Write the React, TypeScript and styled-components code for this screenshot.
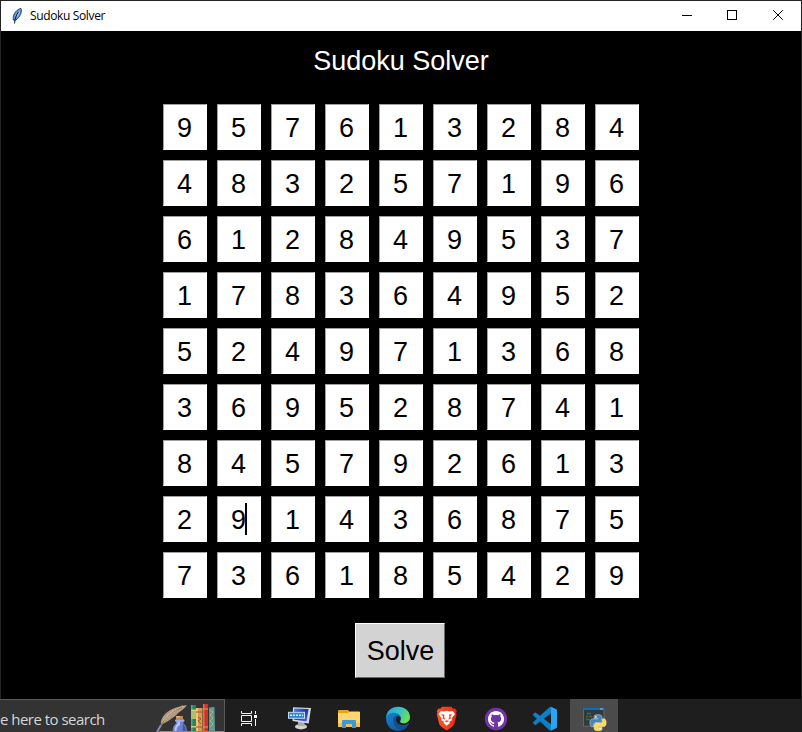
import React from "react";
import styled, { createGlobalStyle } from "styled-components";

const GlobalStyle = createGlobalStyle`
  * { box-sizing: border-box; }
  html, body { margin: 0; padding: 0; background: #000; }
  svg { display: block; }
`;

const Screen = styled.div`
  width: 802px;
  height: 732px;
  display: flex;
  flex-direction: column;
  overflow: hidden;
`;

const Window = styled.main`
  height: 699px;
  display: flex;
  flex-direction: column;
  background: #000;
  border: solid #242424;
  border-width: 1px 1px 0 1px;
`;

const TitleBar = styled.header`
  height: 30px;
  flex: none;
  display: flex;
  align-items: center;
  background: #fff;
  padding-left: 9px;
`;

const TitleText = styled.span`
  flex: 1;
  margin-left: 5px;
  font: 12px/16px "Segoe UI", "Open Sans", sans-serif;
  letter-spacing: -0.36px;
  color: #000;
`;

const Controls = styled.div`
  display: flex;
  height: 30px;
`;

const ControlIcon = styled.svg`
  width: 46px;
  height: 30px;
  stroke: #000;
  fill: none;
`;

const Client = styled.section`
  flex: 1;
  display: flex;
  flex-direction: column;
  align-items: center;
  font: 27px/31px Arial, "Liberation Sans", sans-serif;
`;

const Heading = styled.h1`
  margin: 15px 0 0;
  font: inherit;
  color: #fff;
`;

const Board = styled.div`
  margin-top: 27px;
  display: grid;
  grid-template-columns: repeat(9, 44px);
  grid-auto-rows: 46px;
  gap: 10px;
`;

const Cell = styled.div`
  position: relative;
  display: flex;
  align-items: center;
  padding: 3px 0 0 13px;
  background: #fff;
  color: #000;
  border: 1px solid #fff;
  border-top-color: #a0a0a0;
  border-left-color: #a0a0a0;
`;

const Caret = styled.i`
  position: absolute;
  left: 27px;
  top: 6px;
  width: 2px;
  height: 32px;
  background: #000;
`;

const SolveButton = styled.button`
  margin: 25px 0 0;
  width: 90px;
  height: 55px;
  padding: 2px 0 0 1px;
  font: inherit;
  color: #000;
  background: #d3d3d3;
  border: 1px solid #fff;
  border-right-color: #696969;
  border-bottom-color: #696969;
  transform: translateX(-1px);
`;

const Taskbar = styled.footer`
  height: 33px;
  display: grid;
  grid-template-columns: 225px 49px 49px 50px 49px 49px 49px 50px 48px 1fr;
  background: #1e1e1e;
`;

const SearchBox = styled.div`
  display: flex;
  background: #333;
  border-top: 1px solid #5b5b5b;
  border-right: 1px solid #5b5b5b;
  overflow: hidden;
`;

const SearchText = styled.span`
  width: 150px;
  flex: none;
  padding-top: 9px;
  font: 15px/20px "Segoe UI", "Open Sans", sans-serif;
  letter-spacing: -0.52px;
  white-space: nowrap;
  color: #d6d6d6;
`;

const SearchArt = styled.svg`
  width: 74px;
  height: 32px;
  flex: none;
`;

const TaskItem = styled.div<{ $active?: boolean }>`
  height: 33px;
  overflow: hidden;
  background: ${(p) => (p.$active ? "#4b4b4b" : "transparent")};
`;

const TaskIcon = styled.svg`
  width: 48px;
  height: 33px;
`;

const rows = [
  "957613284",
  "483257196",
  "612849537",
  "178364952",
  "524971368",
  "369528741",
  "845792613",
  "291436875",
  "736185429",
];

const Quill = () => (
  <svg width="15" height="18" viewBox="0 0 15 18">
    <path d="M3.3 13C2.6 9 4.5 3.6 10.8 1.3C12.4 4.5 10.4 10 5.5 13.3Z" fill="#5c9ae0" stroke="#26333e" strokeWidth=".9" />
    <path d="M5.4 9L10 3L9.8 6L7.2 10Z" fill="#9cc8f0" />
    <path d="M8.5 5C6.4 8 5 11 4.5 16.5" stroke="#101820" strokeWidth="1" fill="none" />
  </svg>
);

const DeskArt = () => (
  <SearchArt viewBox="0 1 74 32">
    <path d="M7.5 33C12 23 20 13 33 6.5" stroke="#7b6a58" strokeWidth="1.4" fill="none" />
    <path d="M11 26C10 18 17 8.5 37 6.2C34 10 31 12 28 14C26 17 23 18.5 21 20C18 22.5 14 24 11 26Z" fill="#b49a7f" />
    <path d="M11 26C14 18 22 10 37 6.2C27 10 18 17 11 26Z" fill="#e2cdb4" />
    <path d="M11 26C16 18 23 12 32 8.5" stroke="#705a48" strokeWidth=".8" fill="none" />
    <path d="M6.8 33L11 26" stroke="#8d84ba" strokeWidth="1.8" />
    <path d="M26 20H33.5V24.5C36 26 37 29 37 33H22.5C22.5 29 23.5 26 26 24.5Z" fill="#6d7fd0" />
    <path d="M27.5 22H30V26C27.5 27 26.5 29 26.5 32H24.5C24.5 28 25.5 26 27.5 25Z" fill="#bac6fa" />
    <path d="M33 25C35 27 36 29 36 33H32.5Z" fill="#4557a4" />
    <rect x="25" y="20.5" width="9.5" height="2.2" rx="1" fill="#a1aceb" />
    <path d="M26 17H33V21H26Z" fill="#bc8957" />
    <path d="M26 17H30V18.5H26Z" fill="#deb07e" />
    <path d="M41 6H46V32H41Z" fill="#218463" />
    <path d="M41 6H42.5V32H41Z" fill="#45b388" />
    <path d="M41 10.5H46V12H41ZM41 27H46V28.5H41Z" fill="#dfc666" />
    <path d="M41 12H46V20H41Z" fill="#a7c272" />
    <path d="M46 9H52.5V32H46Z" fill="#dc984c" />
    <path d="M46 9H48V32H46Z" fill="#f5c37b" />
    <path d="M46 13H52.5M46 28H52.5" stroke="#8d5834" />
    <path d="M48 18L51 20L48 22L51 25" stroke="#8c582c" fill="none" />
    <path d="M53 5H58V32H53Z" fill="#cb3429" />
    <path d="M53 5H54.5V32H53Z" fill="#ed6552" />
    <path d="M53 10H58M53 28H58" stroke="#ef9a56" />
    <path d="M59 8.5L64.5 8L65 32H59Z" fill="#5b9c9b" />
    <path d="M60 11L63 13L60 16L63 19L60 22L63 25L60 28" stroke="#c1b16d" fill="none" />
    <path d="M9 32.5H74" stroke="#9d8769" />
  </SearchArt>
);

const TaskView = () => (
  <TaskIcon viewBox="0 0 48 33" fill="none" stroke="#f4f4f4" strokeWidth="1">
    <path d="M16.5 12V14.5H26.5V12M16.5 27V24.5H26.5V27M16.5 16.5H26.5V22.5H16.5ZM30.5 12V15M30.5 20V27" />
    <rect x="29" y="16" width="3" height="3" fill="#fff" stroke="none" />
  </TaskIcon>
);

const RemoteKeyboard = () => (
  <TaskIcon viewBox="0 0 48 33">
    <defs>
      <linearGradient id="crt" x1="0" y1="0" x2="1" y2="1">
        <stop offset="0" stopColor="#5f80ee" />
        <stop offset=".5" stopColor="#1432c8" />
        <stop offset="1" stopColor="#5779e4" />
      </linearGradient>
    </defs>
    <ellipse cx="27" cy="27.7" rx="6" ry="2.7" fill="#d2d3cf" />
    <path d="M24 22H30L31 27H24Z" fill="#aaaea9" />
    <path d="M19 8.3L37 9L34.7 24.5L18.5 22Z" fill="#d9dcda" />
    <path d="M20.2 9.5L34.6 10L32.6 22.5L19.7 20.5Z" fill="url(#crt)" />
    <rect x="14" y="12.8" width="17" height="7" fill="#c4dcf2" />
    <rect x="15" y="13.8" width="15" height="5" fill="#3487cb" />
    <path d="M16 16.3H29" stroke="#d8ebf8" strokeWidth="1.4" strokeDasharray="2 1" />
  </TaskIcon>
);

const Folder = () => (
  <TaskIcon viewBox="0 0 48 33">
    <path d="M15 12Q15 11 16 11H25L27 13H36Q37 13 37 14V28H15Z" fill="#e5a51e" />
    <path d="M15 14H25L27 12.5H36Q37 12.5 37 13.5V28H15Z" fill="#ffd66b" />
    <path d="M15 24H37V28H15Z" fill="#f6bf4b" />
    <path d="M19 29V22Q19 21 20 21H32Q33 21 33 22V29H29V25H23V29Z" fill="#3c98dc" />
  </TaskIcon>
);

const Edge = () => (
  <TaskIcon viewBox="0 0 48 33">
    <defs>
      <linearGradient id="edgeTop" x1="0" y1="0" x2="1" y2=".4">
        <stop offset="0" stopColor="#249fd9" />
        <stop offset=".55" stopColor="#32c3c8" />
        <stop offset="1" stopColor="#66df5d" />
      </linearGradient>
      <linearGradient id="edgeLow" x1="0" y1="0" x2="1" y2="1">
        <stop offset="0" stopColor="#1b82d1" />
        <stop offset="1" stopColor="#0b4e96" />
      </linearGradient>
    </defs>
    <path d="M13 19C13 15 17 13 21 13C27 13 29 17 28 20C27 22 27 24 31 24.5C34 25 35.5 24 36 23.7C34 29 30 31.8 25 31.8C18 31.8 13 26.5 13 19Z" fill="url(#edgeLow)" />
    <path d="M20.5 19C19.5 26 24 31.5 29.5 31C33 29.5 35 27 36 24C29 28 22 25 22.5 20C22.7 18 24 16.8 25 16.5C22 16.5 20.8 17.5 20.5 19Z" fill="#124f92" />
    <path d="M24 17.5C22 19.5 22.5 24.5 27.5 25.8C30 26.4 33 26 35.5 24.8C33 25 28 25 27 22.5C26.8 21.5 28 20.8 27.6 19C27.2 17.5 25.5 16.8 24 17.5Z" fill="#1e1e1e" />
    <path d="M13 19C13.4 12 18.5 7.8 25 7.8C32 7.8 37 12.5 37 18C37 22 34 24.3 30.5 24.3C27.5 24.3 26.5 23 27.5 21.5C29.5 18 26 13.8 21 13.8C17 13.8 13.7 16 13 19Z" fill="url(#edgeTop)" />
  </TaskIcon>
);

const Brave = () => (
  <TaskIcon viewBox="0 0 48 33">
    <defs>
      <linearGradient id="brave">
        <stop offset="0" stopColor="#ff5723" />
        <stop offset="1" stopColor="#ef2616" />
      </linearGradient>
    </defs>
    <path d="M20 7.8H29.5L31.2 9.7L33 9.4L34.8 12L34.1 14L34.6 15.5L32.3 25L30.5 27.5L24.7 31.5L19 27.5L17.2 25L14.8 15.5L15.4 14L14.7 12L16.5 9.4L18.3 9.7Z" fill="url(#brave)" />
    <path d="M18.8 12L22 12.5L24.7 11.8L27.5 12.5L30.7 12L33 15L29.8 19.3L30.2 21L27.2 23L28 24L24.7 26.8L21.4 24L22.3 23L19.2 21L19.7 19.3L16.5 15Z" fill="#fff" />
    <path d="M19 15.1L22.7 15.8L22.1 17.5L23.2 20.7L20.5 19.5L21 17.3ZM30.5 15.1L26.8 15.8L27.4 17.5L26.3 20.7L29 19.5L28.5 17.3ZM22.3 22L24.7 23.2L27.2 22L24.7 21.2Z" fill="#f44624" />
  </TaskIcon>
);

const GitHub = () => (
  <TaskIcon viewBox="0 0 48 33">
    <circle cx="25" cy="20" r="11.2" fill="#7433a5" />
    <path
      transform="translate(17 11.8) scale(.67)"
      fill="#fff"
      d="M12 .297c-6.63 0-12 5.373-12 12 0 5.303 3.438 9.8 8.205 11.385.6.113.82-.258.82-.577 0-.285-.01-1.04-.015-2.04-3.338.724-4.042-1.61-4.042-1.61C4.422 18.07 3.633 17.7 3.633 17.7c-1.087-.744.084-.729.084-.729 1.205.084 1.838 1.236 1.838 1.236 1.07 1.835 2.809 1.305 3.495.998.108-.776.417-1.305.76-1.605-2.665-.3-5.466-1.332-5.466-5.93 0-1.31.465-2.38 1.235-3.22-.135-.303-.54-1.523.105-3.176 0 0 1.005-.322 3.3 1.23.96-.267 1.98-.399 3-.405 1.02.006 2.04.138 3 .405 2.28-1.552 3.285-1.23 3.285-1.23.645 1.653.24 2.873.12 3.176.765.84 1.23 1.91 1.23 3.22 0 4.61-2.805 5.625-5.475 5.92.42.36.81 1.096.81 2.22 0 1.606-.015 2.896-.015 3.286 0 .315.21.69.825.57C20.565 22.092 24 17.592 24 12.297c0-6.627-5.373-12-12-12"
    />
  </TaskIcon>
);

const VsCode = () => (
  <TaskIcon viewBox="0 0 48 33">
    <g transform="translate(13 7.7)">
      <path
        fill="#0b80c8"
        d="M23.15 2.587L18.21.21a1.494 1.494 0 0 0-1.705.29l-9.46 8.63-4.12-3.128a.999.999 0 0 0-1.276.057L.327 7.261A1 1 0 0 0 .326 8.74L3.899 12 .326 15.26a1 1 0 0 0 .001 1.479L1.65 17.94a.999.999 0 0 0 1.276.057l4.12-3.128 9.46 8.63a1.492 1.492 0 0 0 1.704.29l4.942-2.377A1.5 1.5 0 0 0 24 20.06V3.939a1.5 1.5 0 0 0-.85-1.352zm-5.146 14.861L10.826 12l7.178-5.448v10.896z"
      />
      <path d="M18 .2L23.15 2.587Q24 3 24 3.94V20.06Q24 21 23.15 21.4L18 23.8Z" fill="#2ba4ee" />
    </g>
  </TaskIcon>
);

const snake =
  "M14.25.18l.9.2.73.26.59.3.45.32.34.34.25.34.16.33.1.3.04.26.02.2-.01.13V8.5l-.05.63-.13.55-.21.46-.26.38-.3.31-.33.25-.35.19-.35.14-.33.1-.3.07-.26.04-.21.02H8.77l-.69.05-.59.14-.5.22-.41.27-.33.32-.27.35-.2.36-.15.37-.1.35-.07.32-.04.27-.02.21v3.06H3.17l-.21-.03-.28-.07-.32-.12-.35-.18-.36-.26-.36-.36-.35-.46-.32-.59-.28-.73-.21-.88-.14-1.05-.05-1.23.06-1.22.16-1.04.24-.87.32-.71.36-.57.4-.44.42-.33.42-.24.4-.16.36-.1.32-.05.24-.01h.16l.06.01h8.16v-.83H6.18l-.01-2.75-.02-.37.05-.34.11-.31.17-.28.25-.26.31-.23.38-.2.44-.18.51-.15.58-.12.64-.1.71-.06.77-.04.84-.02 1.27.05z";

const PythonConsole = () => (
  <TaskIcon viewBox="0 0 48 33">
    <rect x="13" y="9" width="21.5" height="18.7" fill="#666" />
    <rect x="14" y="11" width="19.5" height="15.7" fill="#353839" />
    <rect x="13" y="9" width="21.5" height="2" fill="#0871bd" />
    <path d="M30 10H33" stroke="#9bc6e5" />
    <path d="M17 14.5H21M16 17.5H18M19 17.5H22M16 20.5H20" stroke="#3f6f43" strokeWidth="1.3" />
    <g transform="translate(20 15.7) scale(.67)">
      <path d={snake} fill="#3f86bd" stroke="#d9e4ea" strokeWidth=".8" />
      <path d={snake} fill="#ffda55" stroke="#fff3bd" strokeWidth=".8" transform="rotate(180 12 12)" />
      <circle cx="8.8" cy="3.3" r="1.2" fill="#fff" />
      <circle cx="15.2" cy="20.7" r="1.2" fill="#fff" />
    </g>
  </TaskIcon>
);

const apps = [TaskView, RemoteKeyboard, Folder, Edge, Brave, GitHub, VsCode, PythonConsole];

export default function App() {
  return (
    <Screen>
      <GlobalStyle />
      <Window>
        <TitleBar>
          <Quill />
          <TitleText>Sudoku Solver</TitleText>
          <Controls>
            <ControlIcon viewBox="0 0 46 30"><path d="M19 14.5H29" /></ControlIcon>
            <ControlIcon viewBox="0 0 46 30"><rect x="18.5" y="9.5" width="9" height="9" /></ControlIcon>
            <ControlIcon viewBox="0 0 46 30"><path d="M18.2 9.2L27.8 18.8M27.8 9.2L18.2 18.8" /></ControlIcon>
          </Controls>
        </TitleBar>
        <Client>
          <Heading>Sudoku Solver</Heading>
          <Board>
            {rows.map((row, r) =>
              [...row].map((digit, c) => (
                <Cell key={`${r}-${c}`}>
                  {digit}
                  {r === 7 && c === 1 && <Caret />}
                </Cell>
              ))
            )}
          </Board>
          <SolveButton>Solve</SolveButton>
        </Client>
      </Window>
      <Taskbar>
        <SearchBox>
          <SearchText>e here to search</SearchText>
          <DeskArt />
        </SearchBox>
        {apps.map((Icon, i) => (
          <TaskItem key={i} $active={i === apps.length - 1}>
            <Icon />
          </TaskItem>
        ))}
      </Taskbar>
    </Screen>
  );
}
